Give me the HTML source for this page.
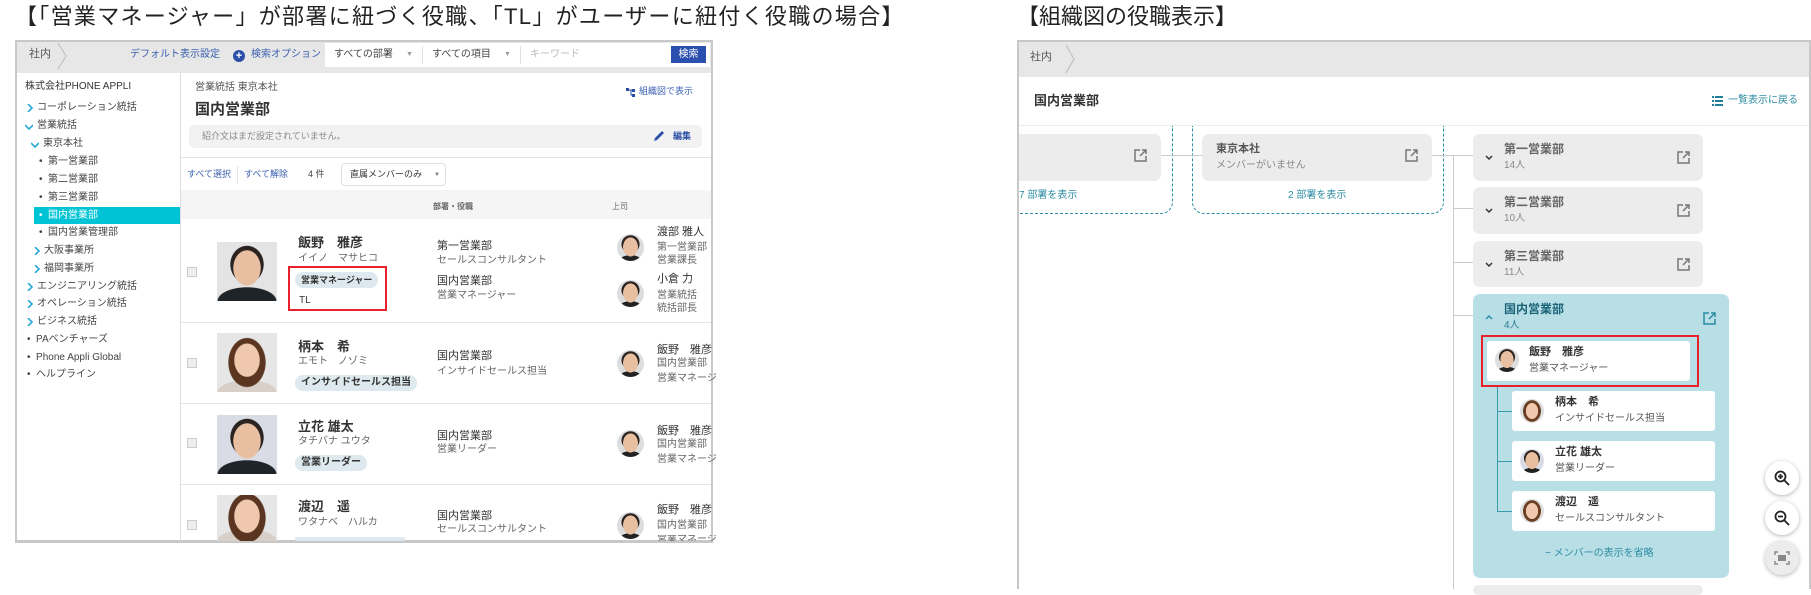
<!DOCTYPE html>
<html><head><meta charset="utf-8"><style>
*{margin:0;padding:0;box-sizing:border-box}
body{width:1811px;height:589px;background:#fff;position:relative;overflow:hidden;font-family:"Liberation Sans","Noto Sans CJK JP",sans-serif;color:#333}
.a{position:absolute;white-space:nowrap;line-height:1}
.t{font-size:11px}
.s{font-size:10px;color:#666}
.b{font-weight:bold}
.blue{color:#3a5fb0}
.teal{color:#2b8ca3}
.ph{position:absolute;width:60px;height:59px;background:radial-gradient(ellipse 14px 18px at 50% 44%,#e9bfa2 96%,transparent 100%),radial-gradient(ellipse 17px 19px at 50% 38%,#2a2320 96%,transparent 100%),radial-gradient(ellipse 30px 14px at 50% 100%,#1f2428 96%,transparent 100%),#e4e4e4}
.ph.f{background:radial-gradient(ellipse 13px 17px at 50% 46%,#efc8ad 96%,transparent 100%),radial-gradient(ellipse 19px 25px at 50% 50%,#5a3520 96%,transparent 100%),radial-gradient(ellipse 30px 12px at 50% 100%,#d8d0c8 96%,transparent 100%),#e6e6e6}
.av{position:absolute;border-radius:50%;background:radial-gradient(ellipse 28% 36% at 50% 48%,#e9bfa2 96%,transparent 100%),radial-gradient(ellipse 34% 34% at 50% 38%,#2a2320 96%,transparent 100%),radial-gradient(ellipse 42% 22% at 50% 100%,#222 96%,transparent 100%),#ddd}
.av.f{background:radial-gradient(ellipse 26% 34% at 50% 50%,#efc8ad 96%,transparent 100%),radial-gradient(ellipse 38% 46% at 50% 50%,#6a3e22 96%,transparent 100%),#e0e0e0}
.cb{position:absolute;width:10px;height:10px;border:1px solid #ccc;background:#eee}
.tag{position:absolute;height:16px;border-radius:8px;background:#dde9ee;font-size:10px;font-weight:bold;line-height:16px;padding:0 8px;color:#333}
.hl{position:absolute;height:1px;background:#e6e6e6}
.card{position:absolute;background:#ececec;border-radius:7px}
.ext{position:absolute;width:13px;height:13px}
.mc{position:absolute;background:#fff;border-radius:3px}
.zb{position:absolute;width:34px;height:34px;border-radius:50%;background:#fff;box-shadow:0 1px 4px rgba(0,0,0,.3)}
.cr{position:absolute;width:8px;height:8px}
</style></head><body>

<div class="a" style="left:15px;top:6px;font-size:22px;letter-spacing:1.3px;color:#222">【「営業マネージャー」が部署に紐づく役職、「TL」がユーザーに紐付く役職の場合】</div>
<div class="a" style="left:1017px;top:6px;font-size:22px;color:#222">【組織図の役職表示】</div>

<!-- LEFT PANEL -->
<div style="position:absolute;left:15px;top:40px;width:698px;height:502px;border:2px solid #c8c8c8;overflow:hidden;background:#fff">
<div style="position:absolute;left:0;top:0;width:100%;height:31px;background:#e7e7e7"></div>
</div>
<div class="a t" style="left:29px;top:49px;color:#555">社内</div>
<svg class="a" style="left:56px;top:42px" width="12" height="28"><path d="M2 1 L10 14 L2 27" fill="none" stroke="#bbb"/></svg>
<div class="a s blue" style="left:130px;top:50px;color:#3a5fb0">デフォルト表示設定</div>
<div class="a" style="left:233px;top:50px;width:12px;height:12px;border-radius:50%;background:#2b4fa6;color:#fff;font-size:11px;line-height:12px;text-align:center;font-weight:bold">+</div>
<div class="a s" style="left:251px;top:50px;color:#3a5fb0">検索オプション</div>
<div style="position:absolute;left:325px;top:43px;width:385px;height:24px;background:#fff"></div>
<div class="a s" style="left:334px;top:50px;color:#444">すべての部署</div>
<div class="a" style="left:406px;top:51px;font-size:7px;color:#999">▼</div>
<div style="position:absolute;left:422px;top:46px;width:1px;height:18px;background:#e0e0e0"></div>
<div class="a s" style="left:432px;top:50px;color:#444">すべての項目</div>
<div class="a" style="left:504px;top:51px;font-size:7px;color:#999">▼</div>
<div style="position:absolute;left:520px;top:46px;width:1px;height:18px;background:#e0e0e0"></div>
<div class="a s" style="left:530px;top:50px;color:#bbb">キーワード</div>
<div class="a" style="left:671px;top:46px;width:35px;height:17px;background:#2b4fae;color:#fff;font-size:10px;line-height:17px;text-align:center">検索</div>

<!-- sidebar -->
<div style="position:absolute;left:180px;top:71px;width:1px;height:470px;background:#ddd"></div>
<div class="a s" style="left:25px;top:82px;color:#333">株式会社PHONE APPLI</div>
<svg class="cr" style="left:26px;top:104px"><path d="M2 0L6 4L2 8" fill="none" stroke="#29a9d6" stroke-width="1.6"/></svg>
<div class="a s" style="left:37px;top:103px;color:#444">コーポレーション統括</div>
<svg class="cr" style="left:25px;top:123px"><path d="M0 2L4 6L8 2" fill="none" stroke="#29a9d6" stroke-width="1.6"/></svg>
<div class="a s" style="left:37px;top:121px;color:#444">営業統括</div>
<svg class="cr" style="left:31px;top:141px"><path d="M0 2L4 6L8 2" fill="none" stroke="#29a9d6" stroke-width="1.6"/></svg>
<div class="a s" style="left:43px;top:139px;color:#444">東京本社</div>
<div class="a s" style="left:39px;top:157px;color:#444">•&nbsp; 第一営業部</div>
<div class="a s" style="left:39px;top:175px;color:#444">•&nbsp; 第二営業部</div>
<div class="a s" style="left:39px;top:193px;color:#444">•&nbsp; 第三営業部</div>
<div style="position:absolute;left:34px;top:207px;width:146px;height:17px;background:#00c4d6"></div>
<div class="a s" style="left:39px;top:211px;color:#fff">•&nbsp; 国内営業部</div>
<div class="a s" style="left:39px;top:228px;color:#444">•&nbsp; 国内営業管理部</div>
<svg class="cr" style="left:33px;top:247px"><path d="M2 0L6 4L2 8" fill="none" stroke="#29a9d6" stroke-width="1.6"/></svg>
<div class="a s" style="left:44px;top:246px;color:#444">大阪事業所</div>
<svg class="cr" style="left:33px;top:265px"><path d="M2 0L6 4L2 8" fill="none" stroke="#29a9d6" stroke-width="1.6"/></svg>
<div class="a s" style="left:44px;top:264px;color:#444">福岡事業所</div>
<svg class="cr" style="left:26px;top:283px"><path d="M2 0L6 4L2 8" fill="none" stroke="#29a9d6" stroke-width="1.6"/></svg>
<div class="a s" style="left:37px;top:282px;color:#444">エンジニアリング統括</div>
<svg class="cr" style="left:26px;top:300px"><path d="M2 0L6 4L2 8" fill="none" stroke="#29a9d6" stroke-width="1.6"/></svg>
<div class="a s" style="left:37px;top:299px;color:#444">オペレーション統括</div>
<svg class="cr" style="left:26px;top:318px"><path d="M2 0L6 4L2 8" fill="none" stroke="#29a9d6" stroke-width="1.6"/></svg>
<div class="a s" style="left:37px;top:317px;color:#444">ビジネス統括</div>
<div class="a s" style="left:27px;top:335px;color:#444">•&nbsp; PAベンチャーズ</div>
<div class="a s" style="left:27px;top:353px;color:#444">•&nbsp; Phone Appli Global</div>
<div class="a s" style="left:27px;top:370px;color:#444">•&nbsp; ヘルプライン</div>

<!-- main -->
<div class="a s" style="left:195px;top:83px;color:#555">営業統括 東京本社</div>
<div class="a b" style="left:195px;top:102px;font-size:15px;color:#333">国内営業部</div>
<svg class="a" style="left:626px;top:88px" width="10" height="9"><rect x="0" y="0" width="3" height="3" fill="#2b4fa6"/><rect x="6" y="1" width="3" height="3" fill="#2b4fa6"/><rect x="6" y="6" width="3" height="3" fill="#2b4fa6"/><path d="M3 2H6M5 2V7H6" stroke="#2b4fa6" fill="none"/></svg>
<div class="a s" style="left:639px;top:87px;color:#3a5fb0;font-size:9px">組織図で表示</div>
<div style="position:absolute;left:189px;top:125px;width:513px;height:23px;background:#f2f2f2;border-radius:5px"></div>
<div class="a" style="left:202px;top:132px;font-size:9px;color:#888">紹介文はまだ設定されていません。</div>
<svg class="a" style="left:653px;top:130px" width="12" height="12"><path d="M1 11 L2 8 L9 1 L11 3 L4 10 Z" fill="#2b4fa6"/></svg>
<div class="a b" style="left:673px;top:132px;font-size:9px;color:#2b4fa6">編集</div>
<div class="hl" style="left:181px;top:157px;width:530px;background:#e3e3e3"></div>
<div class="a" style="left:187px;top:170px;font-size:9px;color:#3a5fb0">すべて選択</div>
<div style="position:absolute;left:237px;top:166px;width:1px;height:18px;background:#e3e3e3"></div>
<div class="a" style="left:244px;top:170px;font-size:9px;color:#3a5fb0">すべて解除</div>
<div class="a" style="left:308px;top:170px;font-size:9px;color:#444">4 件</div>
<div style="position:absolute;left:341px;top:163px;width:105px;height:23px;border:1px solid #e0e0e0;border-radius:4px"></div>
<div class="a" style="left:350px;top:170px;font-size:9px;color:#333">直属メンバーのみ</div>
<div class="a" style="left:434px;top:172px;font-size:6px;color:#777">▼</div>
<div style="position:absolute;left:181px;top:190px;width:530px;height:29px;background:#f5f5f5"></div>
<div class="a b" style="left:433px;top:203px;font-size:8px;color:#666">部署・役職</div>
<div class="a" style="left:612px;top:203px;font-size:8px;color:#666">上司</div>

<!-- row1 -->
<div class="cb" style="left:187px;top:267px"></div>
<div class="ph" style="left:217px;top:242px"></div>
<div class="a b" style="left:298px;top:236px;font-size:13px">飯野　雅彦</div>
<div class="a s" style="left:298px;top:254px">イイノ　マサヒコ</div>
<div class="tag" style="left:295px;top:272px;padding:0 6px;font-size:9px">営業マネージャー</div>
<div class="a s" style="left:299px;top:296px;color:#333">TL</div>
<div style="position:absolute;left:288px;top:266px;width:99px;height:45px;border:2px solid #e8202a"></div>
<div class="a t" style="left:437px;top:241px">第一営業部</div>
<div class="a s" style="left:437px;top:256px">セールスコンサルタント</div>
<div class="a t" style="left:437px;top:276px">国内営業部</div>
<div class="a s" style="left:437px;top:291px">営業マネージャー</div>
<div class="av" style="left:617px;top:234px;width:27px;height:27px"></div>
<div class="a t" style="left:657px;top:227px">渡部 雅人</div>
<div class="a s" style="left:657px;top:243px">第一営業部</div>
<div class="a s" style="left:657px;top:256px">営業課長</div>
<div class="av" style="left:617px;top:280px;width:27px;height:27px"></div>
<div class="a t" style="left:657px;top:274px">小倉 力</div>
<div class="a s" style="left:657px;top:291px">営業統括</div>
<div class="a s" style="left:657px;top:304px">統括部長</div>
<div class="hl" style="left:181px;top:322px;width:530px"></div>

<!-- row2 -->
<div class="cb" style="left:187px;top:358px"></div>
<div class="ph f" style="left:217px;top:333px"></div>
<div class="a b" style="left:298px;top:340px;font-size:13px">柄本　希</div>
<div class="a s" style="left:298px;top:357px">エモト　ノゾミ</div>
<div class="tag" style="left:295px;top:375px;padding:0 6px">インサイドセールス担当</div>
<div class="a t" style="left:437px;top:351px">国内営業部</div>
<div class="a s" style="left:437px;top:367px">インサイドセールス担当</div>
<div class="av" style="left:617px;top:350px;width:27px;height:27px"></div>
<div class="a t" style="left:657px;top:345px">飯野　雅彦</div>
<div class="a s" style="left:657px;top:359px">国内営業部</div>
<div class="a s" style="left:657px;top:374px">営業マネージ</div>
<div class="hl" style="left:181px;top:403px;width:530px"></div>

<!-- row3 -->
<div class="cb" style="left:187px;top:438px"></div>
<div class="ph" style="left:217px;top:415px;background-color:#d9dce4"></div>
<div class="a b" style="left:298px;top:420px;font-size:13px">立花 雄太</div>
<div class="a s" style="left:298px;top:437px">タチバナ ユウタ</div>
<div class="tag" style="left:295px;top:455px;padding:0 6px">営業リーダー</div>
<div class="a t" style="left:437px;top:431px">国内営業部</div>
<div class="a s" style="left:437px;top:445px">営業リーダー</div>
<div class="av" style="left:617px;top:430px;width:27px;height:27px"></div>
<div class="a t" style="left:657px;top:426px">飯野　雅彦</div>
<div class="a s" style="left:657px;top:440px">国内営業部</div>
<div class="a s" style="left:657px;top:455px">営業マネージ</div>
<div class="hl" style="left:181px;top:484px;width:530px"></div>

<!-- row4 -->
<div class="cb" style="left:187px;top:520px"></div>
<div class="ph f" style="left:217px;top:495px;height:46px"></div>
<div class="a b" style="left:298px;top:500px;font-size:13px">渡辺　遥</div>
<div class="a s" style="left:298px;top:518px">ワタナベ　ハルカ</div>
<div class="tag" style="left:295px;top:537px;width:110px;height:4px"></div>
<div class="a t" style="left:437px;top:511px">国内営業部</div>
<div class="a s" style="left:437px;top:525px">セールスコンサルタント</div>
<div class="av" style="left:617px;top:512px;width:27px;height:27px"></div>
<div class="a t" style="left:657px;top:505px">飯野　雅彦</div>
<div class="a s" style="left:657px;top:521px">国内営業部</div>
<div class="a s" style="left:657px;top:535px;height:6px;overflow:hidden">営業マネージ</div>
<div style="position:absolute;left:15px;top:541px;width:698px;height:2px;background:#c8c8c8"></div>

<!-- RIGHT PANEL -->
<div style="position:absolute;left:1017px;top:40px;width:794px;height:549px;border:2px solid #c8c8c8;border-bottom:none;background:#fff"></div>
<div style="position:absolute;left:1019px;top:42px;width:790px;height:35px;background:#e7e7e7"></div>
<div class="a t" style="left:1030px;top:52px;color:#555">社内</div>
<svg class="a" style="left:1064px;top:44px" width="12" height="30"><path d="M2 1 L10 15 L2 29" fill="none" stroke="#bbb"/></svg>
<div class="a b" style="left:1034px;top:94px;font-size:13px">国内営業部</div>
<svg class="a" style="left:1712px;top:96px" width="11" height="10"><g fill="#1f7f99"><rect x="0" y="0" width="2" height="2"/><rect x="3" y="0" width="8" height="2"/><rect x="0" y="4" width="2" height="2"/><rect x="3" y="4" width="8" height="2"/><rect x="0" y="8" width="2" height="2"/><rect x="3" y="8" width="8" height="2"/></g></svg>
<div class="a teal" style="left:1728px;top:96px;font-size:10px">一覧表示に戻る</div>
<div class="hl" style="left:1019px;top:125px;width:790px;background:#ececec"></div>

<!-- dashed boxes -->
<div style="position:absolute;left:1000px;top:126px;width:173px;height:88px;border:1px dashed #2b8ca3;border-top:none;border-radius:0 0 12px 12px"></div>
<div style="position:absolute;left:1192px;top:126px;width:252px;height:88px;border:1px dashed #2b8ca3;border-top:none;border-radius:0 0 12px 12px"></div>
<div style="position:absolute;left:1000px;top:120px;width:17px;height:100px;background:#fff"></div>
<div style="position:absolute;left:1017px;top:77px;width:2px;height:512px;background:#c8c8c8"></div>

<div class="card" style="left:1019px;top:134px;width:142px;height:47px;border-radius:0 7px 7px 0"></div>
<svg class="ext" style="left:1134px;top:149px" viewBox="0 0 13 13"><path d="M6 1H1V12H12V7M8 1H12V5M12 1L6 7" fill="none" stroke="#777" stroke-width="1.5"/></svg>
<div class="a teal" style="left:1019px;top:191px;font-size:10px">7 部署を表示</div>
<div class="hl" style="left:1161px;top:155px;width:41px;background:#ccc"></div>
<div class="card" style="left:1202px;top:134px;width:230px;height:47px"></div>
<div class="a b" style="left:1216px;top:144px;font-size:11px;color:#555">東京本社</div>
<div class="a" style="left:1216px;top:161px;font-size:10px;color:#888">メンバーがいません</div>
<svg class="ext" style="left:1405px;top:149px" viewBox="0 0 13 13"><path d="M6 1H1V12H12V7M8 1H12V5M12 1L6 7" fill="none" stroke="#777" stroke-width="1.5"/></svg>
<div class="a teal" style="left:1288px;top:191px;font-size:10px">2 部署を表示</div>
<div class="hl" style="left:1432px;top:155px;width:41px;background:#ccc"></div>
<div style="position:absolute;left:1453px;top:155px;width:1px;height:434px;background:#ccc"></div>
<div class="hl" style="left:1453px;top:208px;width:20px;background:#ccc"></div>
<div class="hl" style="left:1453px;top:262px;width:20px;background:#ccc"></div>
<div class="hl" style="left:1453px;top:315px;width:20px;background:#ccc"></div>

<div class="card" style="left:1473px;top:134px;width:230px;height:47px"></div>
<div class="card" style="left:1473px;top:187px;width:230px;height:47px"></div>
<div class="card" style="left:1473px;top:241px;width:230px;height:46px"></div>
<div class="card" style="left:1473px;top:585px;width:230px;height:10px"></div>

<svg class="cr" style="left:1485px;top:154px"><path d="M1 2L4 5L7 2" fill="none" stroke="#333" stroke-width="1.5"/></svg>
<div class="a b" style="left:1504px;top:143px;font-size:12px;color:#666">第一営業部</div>
<div class="a" style="left:1504px;top:161px;font-size:10px;color:#888">14人</div>
<svg class="ext" style="left:1677px;top:151px" viewBox="0 0 13 13"><path d="M6 1H1V12H12V7M8 1H12V5M12 1L6 7" fill="none" stroke="#777" stroke-width="1.5"/></svg>
<svg class="cr" style="left:1485px;top:207px"><path d="M1 2L4 5L7 2" fill="none" stroke="#333" stroke-width="1.5"/></svg>
<div class="a b" style="left:1504px;top:196px;font-size:12px;color:#666">第二営業部</div>
<div class="a" style="left:1504px;top:214px;font-size:10px;color:#888">10人</div>
<svg class="ext" style="left:1677px;top:204px" viewBox="0 0 13 13"><path d="M6 1H1V12H12V7M8 1H12V5M12 1L6 7" fill="none" stroke="#777" stroke-width="1.5"/></svg>
<svg class="cr" style="left:1485px;top:261px"><path d="M1 2L4 5L7 2" fill="none" stroke="#333" stroke-width="1.5"/></svg>
<div class="a b" style="left:1504px;top:250px;font-size:12px;color:#666">第三営業部</div>
<div class="a" style="left:1504px;top:268px;font-size:10px;color:#888">11人</div>
<svg class="ext" style="left:1677px;top:258px" viewBox="0 0 13 13"><path d="M6 1H1V12H12V7M8 1H12V5M12 1L6 7" fill="none" stroke="#777" stroke-width="1.5"/></svg>

<!-- teal card -->
<div style="position:absolute;left:1473px;top:294px;width:256px;height:284px;background:#b9dfe6;border-radius:7px"></div>
<svg class="cr" style="left:1485px;top:313px"><path d="M1 6L4 3L7 6" fill="none" stroke="#2b8ca3" stroke-width="1.5"/></svg>
<div class="a b" style="left:1504px;top:303px;font-size:12px;color:#1a6478">国内営業部</div>
<div class="a" style="left:1504px;top:321px;font-size:10px;color:#2b7b90">4人</div>
<svg class="ext" style="left:1703px;top:312px" viewBox="0 0 13 13"><path d="M6 1H1V12H12V7M8 1H12V5M12 1L6 7" fill="none" stroke="#2b8ca3" stroke-width="1.5"/></svg>

<div class="mc" style="left:1487px;top:341px;width:203px;height:40px"></div>
<div class="av" style="left:1495px;top:348px;width:24px;height:24px"></div>
<div class="a b" style="left:1529px;top:347px;font-size:11px">飯野　雅彦</div>
<div class="a" style="left:1529px;top:364px;font-size:10px;color:#555">営業マネージャー</div>
<div style="position:absolute;left:1481px;top:335px;width:218px;height:52px;border:2px solid #e8202a"></div>

<div style="position:absolute;left:1497px;top:387px;width:1px;height:124px;background:#3a9ab0"></div>
<div style="position:absolute;left:1497px;top:411px;width:15px;height:1px;background:#3a9ab0"></div>
<div style="position:absolute;left:1497px;top:461px;width:15px;height:1px;background:#3a9ab0"></div>
<div style="position:absolute;left:1497px;top:511px;width:15px;height:1px;background:#3a9ab0"></div>

<div class="mc" style="left:1512px;top:391px;width:203px;height:40px"></div>
<div class="av f" style="left:1520px;top:399px;width:24px;height:24px"></div>
<div class="a b" style="left:1555px;top:397px;font-size:11px">柄本　希</div>
<div class="a" style="left:1555px;top:414px;font-size:10px;color:#555">インサイドセールス担当</div>
<div class="mc" style="left:1512px;top:441px;width:203px;height:40px"></div>
<div class="av" style="left:1520px;top:449px;width:24px;height:24px;background-color:#d9dce4"></div>
<div class="a b" style="left:1555px;top:447px;font-size:11px">立花 雄太</div>
<div class="a" style="left:1555px;top:464px;font-size:10px;color:#555">営業リーダー</div>
<div class="mc" style="left:1512px;top:491px;width:203px;height:40px"></div>
<div class="av f" style="left:1520px;top:499px;width:24px;height:24px"></div>
<div class="a b" style="left:1555px;top:497px;font-size:11px">渡辺　遥</div>
<div class="a" style="left:1555px;top:514px;font-size:10px;color:#555">セールスコンサルタント</div>
<div class="a teal" style="left:1545px;top:549px;font-size:10px">− メンバーの表示を省略</div>

<!-- zoom buttons -->
<div class="zb" style="left:1765px;top:461px"></div>
<svg class="a" style="left:1774px;top:470px" width="16" height="16"><circle cx="6.5" cy="6.5" r="5" fill="none" stroke="#222" stroke-width="1.8"/><path d="M10 10L15 15M4 6.5H9M6.5 4V9" stroke="#222" stroke-width="1.8"/></svg>
<div class="zb" style="left:1765px;top:501px"></div>
<svg class="a" style="left:1774px;top:510px" width="16" height="16"><circle cx="6.5" cy="6.5" r="5" fill="none" stroke="#222" stroke-width="1.8"/><path d="M10 10L15 15M4 6.5H9" stroke="#222" stroke-width="1.8"/></svg>
<div class="zb" style="left:1765px;top:541px;background:#ececec"></div>
<svg class="a" style="left:1774px;top:551px" width="16" height="14"><path d="M1 4V1H4M12 1H15V4M15 10V13H12M4 13H1V10" fill="none" stroke="#888" stroke-width="1.5"/><rect x="4" y="4" width="8" height="6" fill="#888"/></svg>

</body></html>
